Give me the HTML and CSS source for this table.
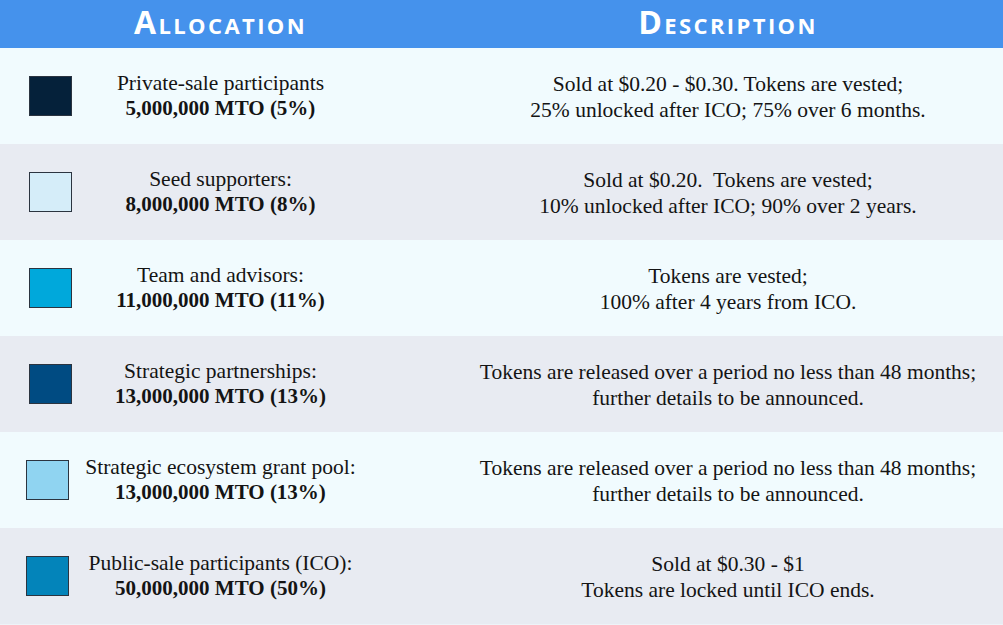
FILE: index.html
```html
<!DOCTYPE html>
<html lang="en">
<head>
<meta charset="utf-8">
<title>Token Allocation</title>
<link rel="stylesheet" href="styles.css">
</head>
<body>
<div class="table">
  <div class="head">
    <div class="hcell">Allocation</div>
    <div class="hcell">Description</div>
  </div>
  <div class="row light">
    <div class="alloc"><span class="swatch s1"></span><div class="label">Private-sale participants<br><b>5,000,000 MTO (5%)</b></div></div>
    <div class="desc">Sold at $0.20 - $0.30. Tokens are vested;<br>25% unlocked after ICO; 75% over 6 months.</div>
  </div>
  <div class="row grey">
    <div class="alloc"><span class="swatch s2"></span><div class="label">Seed supporters:<br><b>8,000,000 MTO (8%)</b></div></div>
    <div class="desc">Sold at $0.20.&nbsp; Tokens are vested;<br>10% unlocked after ICO; 90% over 2 years.</div>
  </div>
  <div class="row light">
    <div class="alloc"><span class="swatch s3"></span><div class="label">Team and advisors:<br><b>11,000,000 MTO (11%)</b></div></div>
    <div class="desc">Tokens are vested;<br>100% after 4 years from ICO.</div>
  </div>
  <div class="row grey">
    <div class="alloc"><span class="swatch s4"></span><div class="label">Strategic partnerships:<br><b>13,000,000 MTO (13%)</b></div></div>
    <div class="desc">Tokens are released over a period no less than 48 months;<br>further details to be announced.</div>
  </div>
  <div class="row light">
    <div class="alloc"><span class="swatch s5 shift"></span><div class="label">Strategic ecosystem grant pool:<br><b>13,000,000 MTO (13%)</b></div></div>
    <div class="desc">Tokens are released over a period no less than 48 months;<br>further details to be announced.</div>
  </div>
  <div class="row grey">
    <div class="alloc"><span class="swatch s6 shift"></span><div class="label">Public-sale participants (ICO):<br><b>50,000,000 MTO (50%)</b></div></div>
    <div class="desc">Sold at $0.30 - $1<br>Tokens are locked until ICO ends.</div>
  </div>
</div>
</body>
</html>
```
FILE: styles.css
```css
html, body {
  margin: 0;
  padding: 0;
  background: #eef3f8;
}
.table {
  width: 1003px;
  display: flex;
  flex-direction: column;
}
.head, .row {
  display: grid;
  grid-template-columns: 441px 1fr;
  column-gap: 12px;
}
.head {
  height: 48px;
  background: #4592ec;
  align-items: start;
}
.hcell {
  text-align: center;
  color: #ffffff;
  font-family: "Open Sans", "DejaVu Sans", sans-serif;
  font-weight: 700;
  font-size: 32px;
  font-variant: small-caps;
  letter-spacing: 2.4px;
  line-height: normal;
}
.row {
  height: 96px;
  align-items: center;
  font-family: "Liberation Serif", "Times New Roman", serif;
  font-size: 21.5px;
  line-height: 25px;
  color: #141414;
}
.light { background: #f1fbfe; }
.grey { background: #e8ebf2; }
.alloc {
  display: grid;
  grid-template-columns: 1fr auto 1fr;
  align-items: center;
}
.swatch {
  justify-self: start;
  margin-left: 29px;
  width: 41px;
  height: 38px;
  border: 1px solid #2b3440;
}
.swatch.shift { margin-left: 26px; }
.label {
  text-align: center;
}
.label b { font-weight: 700; font-size: 21px; }
.desc {
  text-align: center;
  line-height: 26px;
  padding-top: 2px;
}
.s1 { background: #05213a; }
.s2 { background: #d5edf9; }
.s3 { background: #00a8db; }
.s4 { background: #004b82; }
.s5 { background: #90d4f1; }
.s6 { background: #0384ba; }
```
